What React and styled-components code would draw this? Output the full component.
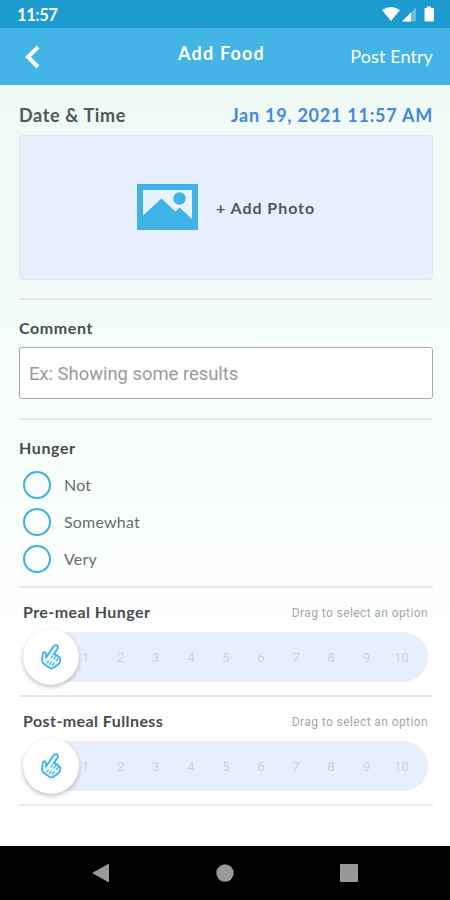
import React, { useState } from "react";
import styled, { createGlobalStyle } from "styled-components";

const HUNGER_OPTIONS = ["Not", "Somewhat", "Very"];
const LEVELS = [1, 2, 3, 4, 5, 6, 7, 8, 9, 10];

const HandIcon = () => (
  <svg width="22" height="27" viewBox="0 0 22 27" fill="#e2f4fe" stroke="#35b1e8" strokeWidth="1.7" strokeLinejoin="round" strokeLinecap="round">
    <path d="M7.500 12.200 L13.600 3.200 Q15.200 1.300 17 2.500 Q18.700 3.800 17.500 5.800 L13.800 11.200 Q15.700 10.700 16.200 12.400 Q18 12.200 18.500 14 Q20.400 14.300 20.400 16.400 L19.700 19.400 Q19.200 20.700 17.800 21.700 L13 25 Q11 25.900 9.200 24.600 L3.400 20.500 Q1.800 19.100 2.100 17.100 L2.800 10.600 Q3.300 8.700 5 9.400 Q6.300 10.100 6.200 11.700 L6 14.500 Z" />
    <path strokeWidth="1.100" d="M12.900 12.600 l-1.800 2.200 M16 13.300 l-2.100 2.600 M18.400 15.100 l-2 2.500 M8.400 18.200 l-1.200 1.600 M11.300 19.100 l-1.700 2.200 M14.300 19.800 l-1.900 2.400" />
  </svg>
);

const LevelSlider = ({ label }) => (
  <SliderSection>
    <SliderHeader>
      <Label $spacing="0.42px">{label}</Label>
      <Hint>Drag to select an option</Hint>
    </SliderHeader>
    <Track>
      <Levels>
        {LEVELS.map((level) => (
          <Level key={level}>{level}</Level>
        ))}
      </Levels>
      <Knob>
        <HandIcon />
      </Knob>
    </Track>
  </SliderSection>
);

const App = () => {
  const [hunger, setHunger] = useState(null);

  return (
    <Screen>
      <GlobalStyle />
      <StatusBar>
        <Clock>11:57</Clock>
        <svg width="54" height="18" viewBox="0 0 54 18" fill="#fff">
          <path d="M0 4 Q9 -2 18 4 L9 15 Z" />
          <path d="M20 15.5 L34 1.5 V15.5 Z" opacity="0.35" />
          <path d="M20 15.5 L29 6.5 V15.5 Z" />
          <path d="M45 0.5 h4 v1.5 h2 q1 0 1 1 V14.500 q0 1 -1 1 h-7.500 q-1 0 -1 -1 V3 q0 -1 1 -1 h1.500 Z" />
        </svg>
      </StatusBar>
      <Header>
        <BackButton aria-label="Back">
          <svg width="16" height="24" viewBox="0 0 16 24" fill="none" stroke="#fff" strokeWidth="4">
            <path d="M13 2 L3 12 L13 22" />
          </svg>
        </BackButton>
        <Title>Add Food</Title>
        <PostButton>Post Entry</PostButton>
      </Header>

      <Form>
        <DateRow>
          <DateLabel>Date &amp; Time</DateLabel>
          <DateValue>Jan 19, 2021 11:57 AM</DateValue>
        </DateRow>
        <PhotoBox>
          <svg width="61" height="46" viewBox="0 0 61 46">
            <path fill="#3fb3e5" d="M0 0 H61 V46 H0 Z" />
            <path fill="#eaf2fd" d="M6 6 H55 V35 L42.500 23.500 L38.500 27.500 L24.500 14.500 L6 31.500 Z" />
            <circle cx="42.500" cy="14.500" r="6.200" fill="#3fb3e5" />
          </svg>
          <PhotoText>+ Add Photo</PhotoText>
        </PhotoBox>
        <Divider />

        <CommentSection>
          <Label>Comment</Label>
          <CommentInput placeholder="Ex: Showing some results" />
        </CommentSection>
        <Divider />

        <HungerSection>
          <Label>Hunger</Label>
          <Options>
            {HUNGER_OPTIONS.map((option) => (
              <Option key={option} onClick={() => setHunger(option)}>
                <Circle $checked={hunger === option} />
                <OptionText>{option}</OptionText>
              </Option>
            ))}
          </Options>
        </HungerSection>
        <Divider />

        <LevelSlider label="Pre-meal Hunger" />
        <Divider />
        <LevelSlider label="Post-meal Fullness" />
        <Divider />
      </Form>

      <NavBar>
        <svg width="18" height="20" viewBox="0 0 18 20" fill="#999">
          <path d="M0 10 L17 0.500 V19.500 Z" />
        </svg>
        <svg width="18" height="18" viewBox="0 0 18 18" fill="#999">
          <circle cx="9" cy="9" r="8.700" />
        </svg>
        <svg width="18" height="18" viewBox="0 0 18 18" fill="#999">
          <rect width="18" height="18" rx="1" />
        </svg>
      </NavBar>
    </Screen>
  );
};

export default App;

// styles
const GlobalStyle = createGlobalStyle`
  * {
    box-sizing: border-box;
  }

  body {
    margin: 0;
    font-family: Lato, "Open Sans", sans-serif;
  }

  button {
    border: 0;
    padding: 0;
    background: none;
    color: inherit;
    font-family: inherit;
  }

  svg {
    display: block;
  }
`;

const Screen = styled.div`
  display: flex;
  flex-direction: column;
  width: 450px;
  height: 900px;
  overflow: hidden;
`;

const StatusBar = styled.div`
  display: flex;
  flex: none;
  justify-content: space-between;
  height: 28px;
  padding: 6px 14px 0 17px;
  background: #1b9bcf;
`;

const Clock = styled.span`
  color: white;
  font-size: 16.5px;
  font-weight: 700;
  line-height: 18px;
  letter-spacing: -0.4px;
`;

const Header = styled.header`
  display: grid;
  flex: none;
  grid-template-columns: 153px 1fr auto;
  height: 57px;
  padding: 0 17px 0 25px;
  background: #42b4e6;
  color: white;
`;

const BackButton = styled.button`
  justify-self: start;
  padding-top: 1px;
`;

const Title = styled.h1`
  margin: 14px 0 0;
  font-size: 18px;
  font-weight: 700;
  line-height: 22px;
  letter-spacing: 1.2px;
`;

const PostButton = styled.button`
  padding-bottom: 1px;
  font-size: 18px;
  letter-spacing: 0.1px;
`;

const Form = styled.main`
  display: flex;
  flex: 1;
  flex-direction: column;
  padding: 20px 17px 0 19px;
  background: linear-gradient(#effaf6, #f7fdfb 50%, #ffffff 75%);
`;

const DateRow = styled.div`
  display: flex;
  justify-content: space-between;
  height: 30px;
  font-size: 18px;
  font-weight: 700;
  line-height: 21px;
`;

const DateLabel = styled.span`
  color: #505856;
  letter-spacing: 0.65px;
`;

const DateValue = styled.span`
  color: #4788dc;
  letter-spacing: 0.75px;
`;

const PhotoBox = styled.div`
  display: flex;
  align-items: center;
  gap: 18px;
  height: 145px;
  margin-bottom: 18px;
  padding: 0 0 1px 117px;
  border: 1px solid #dce6f1;
  border-radius: 4px;
  background: #e8effc;
`;

const PhotoText = styled.span`
  color: #50565f;
  font-size: 16px;
  font-weight: 700;
  letter-spacing: 0.95px;
`;

const Divider = styled.div`
  flex: none;
  height: 2px;
  background: #e5eae9;
`;

const CommentSection = styled.section`
  height: 118px;
  padding-top: 18px;
`;

const Label = styled.div`
  color: #474d4b;
  font-size: 16px;
  font-weight: 700;
  line-height: 20px;
  letter-spacing: ${(props) => props.$spacing || "0.6px"};
`;

const CommentInput = styled.input`
  display: block;
  width: 100%;
  height: 52px;
  margin-top: 9px;
  padding: 1px 9px 0;
  border: 1px solid #aaa;
  border-radius: 3px;
  background: white;
  font-family: Roboto, sans-serif;
  font-size: 18.4px;

  &::placeholder {
    color: #999;
  }
`;

const HungerSection = styled.section`
  height: 166px;
  padding-top: 18px;
`;

const Options = styled.div`
  display: flex;
  flex-direction: column;
  gap: 9px;
  padding: 13px 0 0 4px;
`;

const Option = styled.button`
  display: flex;
  align-items: center;
  gap: 13px;
  height: 28px;
  color: #686d6c;
  font-size: 16px;
  letter-spacing: 0.2px;
`;

const OptionText = styled.span`
  padding-bottom: 2px;
`;

const Circle = styled.span`
  width: 28px;
  height: 28px;
  border: 2px solid #3eb1e3;
  border-radius: 50%;
  background: ${(props) => (props.$checked ? "#3eb1e3" : "transparent")};
`;

const SliderSection = styled.section`
  height: 107px;
  padding: 14px 5px 0 4px;
`;

const SliderHeader = styled.div`
  display: flex;
  justify-content: space-between;
  height: 30px;
`;

const Hint = styled.span`
  color: #a3a7a7;
  font-family: Roboto, sans-serif;
  font-size: 12px;
  line-height: 22px;
  letter-spacing: 0.4px;
`;

const Track = styled.div`
  position: relative;
  height: 50px;
  padding: 0 9px 0 45px;
  border-radius: 25px;
  background: #e8effc;
`;

const Levels = styled.div`
  display: grid;
  grid-template-columns: repeat(10, 1fr);
  align-items: center;
  height: 100%;
`;

const Level = styled.span`
  color: #ccd2dc;
  font-family: Roboto, sans-serif;
  font-size: 13px;
  text-align: center;
`;

// sits over the left end of the track
const Knob = styled.div`
  position: absolute;
  top: -3px;
  left: 0;
  display: flex;
  align-items: center;
  justify-content: center;
  width: 56px;
  height: 56px;
  padding-bottom: 2px;
  border-radius: 50%;
  background: white;
  box-shadow: 0 2px 4px rgba(0, 0, 0, 0.25);
`;

const NavBar = styled.nav`
  display: flex;
  flex: none;
  align-items: center;
  justify-content: space-between;
  height: 54px;
  padding: 0 92px;
  background: black;
`;
